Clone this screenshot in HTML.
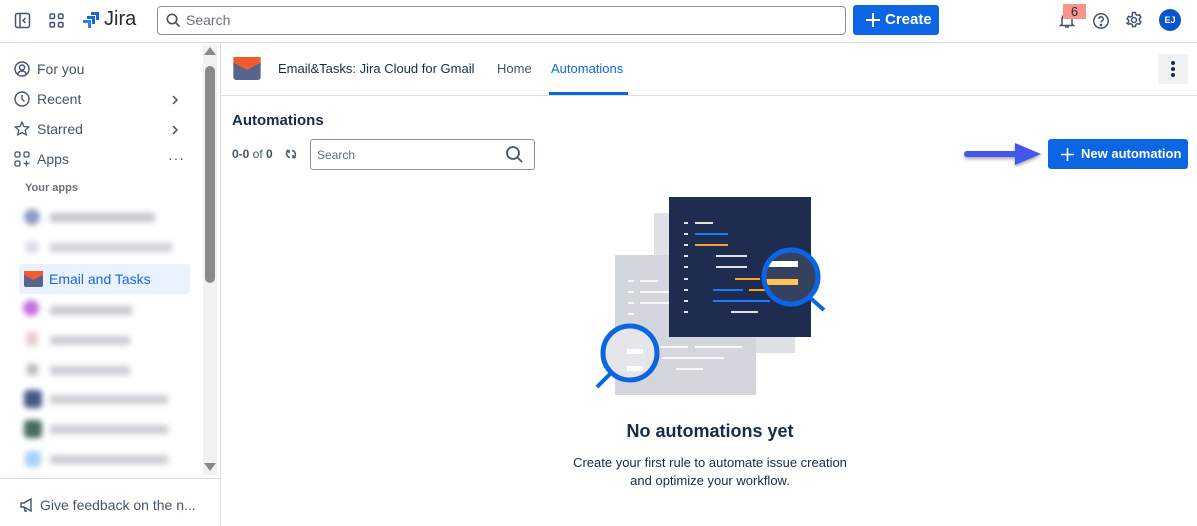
<!DOCTYPE html>
<html><head><meta charset="utf-8"><style>
*{box-sizing:border-box;margin:0;padding:0}
body{width:1197px;height:526px;overflow:hidden;background:#fff;font-family:"Liberation Sans",sans-serif;color:#292a2e;position:relative}
.abs{position:absolute}
.top{left:0;top:0;width:1197px;height:43px;border-bottom:1px solid #dcdfe4}
.search{left:157px;top:6px;width:689px;height:29px;border:1px solid #8c8f97;border-radius:4px;font-size:14px;color:#6b6e76;padding:0 0 0 28px;line-height:27px}
.btn{background:#0c66e4;color:#fff;border-radius:3px;font-weight:bold;font-size:14px}
.side{left:0;top:43px;width:221px;height:483px;border-right:1px solid #dcdfe4}
.nav{position:absolute;left:37px;font-size:14px;color:#44546f}
.blur{position:absolute;filter:blur(3px)}
</style></head><body>
<div class="abs top"></div>
<svg class="abs" style="left:14px;top:12px" width="18" height="18" viewBox="0 0 18 18"><rect x="1.5" y="1.5" width="14" height="14" rx="2" fill="none" stroke="#44546f" stroke-width="1.5"/><line x1="6" y1="2" x2="6" y2="16" stroke="#44546f" stroke-width="1.5"/><path d="M11.5 6 L9 8.5 L11.5 11" fill="none" stroke="#44546f" stroke-width="1.5"/></svg>
<svg class="abs" style="left:49px;top:13px" width="16" height="16" viewBox="0 0 16 16" fill="none" stroke="#44546f" stroke-width="1.5"><rect x="1" y="1" width="4.5" height="4.5" rx="1.2"/><rect x="9.5" y="1" width="4.5" height="4.5" rx="1.2"/><rect x="1" y="9.5" width="4.5" height="4.5" rx="1.2"/><rect x="9.5" y="9.5" width="4.5" height="4.5" rx="1.2"/></svg>
<svg class="abs" style="left:82px;top:11px" width="18" height="18" viewBox="0 0 18 18"><path d="M9 1h8v8h-3V4H9z" fill="#1868db"/><path d="M5 5h8v8h-3V8H5z" fill="#1868db"/><path d="M1 9h8v8H6v-5H1z" fill="#357de8"/></svg>
<div class="abs" style="left:104px;top:8px;font-size:20px;color:#292a2e">Jira</div>
<div class="abs search">Search</div>
<svg class="abs" style="left:166px;top:13px" width="15" height="15" viewBox="0 0 15 15" fill="none" stroke="#505258" stroke-width="1.6"><circle cx="6" cy="6" r="4.7"/><line x1="9.5" y1="9.5" x2="13.5" y2="13.5"/></svg>
<div class="abs btn" style="left:853px;top:5px;width:86px;height:30px;padding-left:32px;line-height:30px;font-size:15px">Create</div>
<svg class="abs" style="left:865px;top:12px" width="16" height="16"><path d="M8 1v14M1 8h14" stroke="#fff" stroke-width="2"/></svg>
<svg class="abs" style="left:1058px;top:11px" width="18" height="18" viewBox="0 0 18 18" fill="none" stroke="#44546f" stroke-width="1.5"><path d="M4 13V8a5 5 0 0 1 10 0v5l1.5 1.5h-13z"/><path d="M7 16h4"/></svg>
<div class="abs" style="left:1063px;top:4px;width:23px;height:15px;background:#f8948a;font-size:13px;text-align:center;line-height:15px;color:#292a2e">6</div>
<svg class="abs" style="left:1092px;top:12px" width="18" height="18" viewBox="0 0 18 18" fill="none" stroke="#44546f" stroke-width="1.5"><circle cx="9" cy="9" r="7.2"/><path d="M6.8 7a2.2 2.2 0 1 1 3 2c-.6.3-.8.7-.8 1.5"/><circle cx="9" cy="13" r=".6" fill="#44546f"/></svg>
<svg class="abs" style="left:1125px;top:11px" width="18" height="18" viewBox="0 0 18 18" fill="none" stroke="#44546f" stroke-width="1.5"><circle cx="9" cy="9" r="2.5"/><path d="M7.6 1.5h2.8l.5 2 1.6.9 2-.6 1.4 2.4-1.5 1.4v1.8l1.5 1.4-1.4 2.4-2-.6-1.6.9-.5 2H7.6l-.5-2-1.6-.9-2 .6L2.1 12.4l1.5-1.4V9.2L2.1 7.8 3.5 5.4l2 .6 1.6-.9z"/></svg>
<div class="abs" style="left:1159px;top:9px;width:22px;height:22px;border-radius:50%;background:#0c55cf;color:#fff;font-size:9px;font-weight:bold;text-align:center;line-height:22px">EJ</div>

<div class="abs side"></div>
<div class="abs" style="left:203px;top:45px;width:14px;height:430px;background:#f1f1f1"></div>
<div class="abs" style="left:205px;top:66px;width:10px;height:217px;background:#8a8a8a;border-radius:5px"></div>
<div class="abs" style="left:204px;top:47px;width:0;height:0;border-left:6px solid transparent;border-right:6px solid transparent;border-bottom:8px solid #8a8a8a"></div>
<div class="abs" style="left:204px;top:463px;width:0;height:0;border-left:6px solid transparent;border-right:6px solid transparent;border-top:8px solid #8a8a8a"></div>
<div class="abs" style="left:0;top:478px;width:220px;border-top:1px solid #dcdfe4"></div>

<svg class="abs" style="left:14px;top:61px" width="16" height="16" viewBox="0 0 16 16" fill="none" stroke="#44546f" stroke-width="1.4"><circle cx="8" cy="8" r="7"/><circle cx="8" cy="6.5" r="2.5"/><path d="M3.5 13c1-2 2.5-3 4.5-3s3.5 1 4.5 3"/></svg>
<div class="nav" style="top:61px">For you</div>
<svg class="abs" style="left:14px;top:91px" width="16" height="16" viewBox="0 0 16 16" fill="none" stroke="#44546f" stroke-width="1.4"><circle cx="8" cy="8" r="7"/><path d="M8 4v4l2.5 2.5"/></svg>
<div class="nav" style="top:91px">Recent</div>
<svg class="abs" style="left:14px;top:121px" width="16" height="16" viewBox="0 0 16 16" fill="none" stroke="#44546f" stroke-width="1.3"><path d="M8 1.2l2 4.3 4.7.5-3.5 3.2 1 4.6L8 11.5l-4.2 2.3 1-4.6L1.3 6l4.7-.5z"/></svg>
<div class="nav" style="top:121px">Starred</div>
<svg class="abs" style="left:14px;top:151px" width="16" height="16" viewBox="0 0 16 16" fill="none" stroke="#44546f" stroke-width="1.3"><rect x="1" y="1" width="5" height="5" rx="1.5"/><rect x="10" y="1" width="5" height="5" rx="1.5"/><rect x="1" y="10" width="5" height="5" rx="1.5"/><path d="M12.5 9.5v6M9.5 12.5h6"/></svg>
<div class="nav" style="top:151px">Apps</div>
<svg class="abs" style="left:170px;top:94px" width="10" height="12"><path d="M3 2l4 4-4 4" fill="none" stroke="#44546f" stroke-width="1.5"/></svg>
<svg class="abs" style="left:170px;top:124px" width="10" height="12"><path d="M3 2l4 4-4 4" fill="none" stroke="#44546f" stroke-width="1.5"/></svg>
<div class="abs" style="left:168px;top:150px;font-size:14px;color:#44546f;letter-spacing:1px">···</div>
<div class="abs" style="left:25px;top:182px;font-size:11px;font-weight:bold;color:#6b6e76">Your apps</div>

<div class="blur" style="left:24px;top:209px;width:16px;height:16px;background:#8a9bc4;border-radius:50%"></div>
<div class="blur" style="left:50px;top:213px;width:105px;height:9px;background:#c3c6cd"></div>
<div class="blur" style="left:26px;top:241px;width:12px;height:12px;background:#d8dbe2"></div>
<div class="blur" style="left:50px;top:243px;width:122px;height:9px;background:#cdd0d5"></div>
<div class="abs" style="left:19px;top:264px;width:171px;height:30px;background:#e9f2fe;border-radius:3px"></div>
<svg class="abs" style="left:24px;top:271px" width="19" height="16" viewBox="0 0 19 16"><path d="M0 4h19v10a2 2 0 0 1-2 2H2a2 2 0 0 1-2-2z" fill="#55658c"/><path d="M0 0h19v4l-9.5 5L0 4z" fill="#f45a2b"/><path d="M0 4l9.5 5L19 4v2l-9.5 5L0 6z" fill="#55658c"/></svg>
<div class="abs" style="left:49px;top:271px;font-size:14px;color:#1868db">Email and Tasks</div>
<div class="blur" style="left:23px;top:300px;width:16px;height:16px;background:#c56de0;border-radius:50%"></div>
<div class="blur" style="left:50px;top:306px;width:82px;height:9px;background:#c8cad0"></div>
<div class="blur" style="left:26px;top:332px;width:12px;height:14px;background:#e8cfd0"></div>
<div class="blur" style="left:50px;top:336px;width:80px;height:9px;background:#cbcdd2"></div>
<div class="blur" style="left:27px;top:364px;width:11px;height:11px;background:#b9bbc0"></div>
<div class="blur" style="left:50px;top:366px;width:80px;height:9px;background:#cbcdd2"></div>
<div class="blur" style="left:24px;top:390px;width:18px;height:18px;background:#44598a;border-radius:4px"></div>
<div class="blur" style="left:50px;top:395px;width:118px;height:9px;background:#cbcdd2"></div>
<div class="blur" style="left:24px;top:420px;width:18px;height:18px;background:#446d5a;border-radius:4px"></div>
<div class="blur" style="left:50px;top:425px;width:118px;height:9px;background:#cbcdd2"></div>
<div class="blur" style="left:25px;top:451px;width:16px;height:16px;background:#a8d3f7;border-radius:4px"></div>
<div class="blur" style="left:50px;top:455px;width:118px;height:9px;background:#cbcdd2"></div>

<svg class="abs" style="left:19px;top:497px" width="16" height="16" viewBox="0 0 16 16" fill="none" stroke="#44546f" stroke-width="1.4"><path d="M2 6h3l7-4v12L5 10H2zM5 10l1 4h2"/></svg>
<div class="abs" style="left:40px;top:497px;font-size:14px;color:#44546f">Give feedback on the n...</div>

<div class="abs" style="left:221px;top:95px;width:976px;border-top:1px solid #dcdfe4"></div>
<svg class="abs" style="left:232px;top:57px" width="30" height="23" viewBox="0 0 19 16"><path d="M0 4h19v10a2 2 0 0 1-2 2H2a2 2 0 0 1-2-2z" fill="#55658c"/><path d="M0 0h19v4l-9.5 5L0 4z" fill="#f45a2b"/><path d="M0 4l9.5 5L19 4v2l-9.5 5L0 6z" fill="#55658c"/></svg>
<div class="abs" style="left:278px;top:61px;font-size:13px;color:#172b4d">Email&amp;Tasks: Jira Cloud for Gmail</div>
<div class="abs" style="left:497px;top:61px;font-size:13px;color:#44546f">Home</div>
<div class="abs" style="left:551px;top:61px;font-size:13px;color:#0c66e4">Automations</div>
<div class="abs" style="left:549px;top:92px;width:79px;height:3px;background:#0c66e4"></div>
<div class="abs" style="left:1158px;top:54px;width:30px;height:30px;background:#f1f2f4;border-radius:3px"></div>
<div class="abs" style="left:1171px;top:61px;width:4px;height:4px;border-radius:50%;background:#172b4d;box-shadow:0 6px 0 #172b4d,0 12px 0 #172b4d"></div>

<div class="abs" style="left:232px;top:112px;font-size:15px;font-weight:bold;color:#172b4d">Automations</div>
<div class="abs" style="left:232px;top:147px;font-size:12px;color:#44546f"><b>0-0</b> of <b>0</b></div>
<svg class="abs" style="left:285px;top:148px" width="12" height="12" viewBox="0 0 12 12" fill="none" stroke="#44546f" stroke-width="1.5"><path d="M3 2.5a4 4 0 0 0 2 7M9 9.5a4 4 0 0 0-2-7M1.5 2.5H4V5M10.5 9.5H8V7"/></svg>
<div class="abs" style="left:310px;top:139px;width:225px;height:31px;border:1px solid #8590a2;border-radius:3px;font-size:12px;color:#626f86;padding:8px 0 0 6px">Search</div>
<svg class="abs" style="left:505px;top:145px" width="19" height="19" viewBox="0 0 19 19" fill="none" stroke="#44546f" stroke-width="1.8"><circle cx="8" cy="8" r="6"/><line x1="12.5" y1="12.5" x2="17" y2="17"/></svg>

<svg class="abs" style="left:960px;top:138px" width="85" height="34"><defs><filter id="s"><feDropShadow dx="0" dy="2" stdDeviation="1.5" flood-opacity=".35"/></filter></defs><g filter="url(#s)"><line x1="7" y1="16" x2="58" y2="16" stroke="#4557ef" stroke-width="6" stroke-linecap="round"/><path d="M55 5l26 11-26 11z" fill="#4557ef"/></g></svg>
<div class="abs btn" style="left:1048px;top:139px;width:140px;height:30px;padding-left:33px;line-height:30px;font-size:13px">New automation</div>
<svg class="abs" style="left:1060px;top:147px" width="15" height="15"><path d="M7.5 1v13M1 7.5h13" stroke="#fff" stroke-width="1.6"/></svg>

<svg class="abs" style="left:580px;top:190px" width="260" height="210" viewBox="580 190 260 210">
<rect x="654" y="213" width="141" height="140" fill="#dfe1e6"/>
<rect x="615" y="255" width="141" height="140" fill="#d3d6dc"/>
<rect x="669" y="197" width="142" height="140" fill="#1d2c4f"/>
<g stroke="#fff" stroke-width="2" opacity=".85"><line x1="628" y1="281" x2="634" y2="281"/><line x1="640" y1="281" x2="658" y2="281"/><line x1="628" y1="292" x2="634" y2="292"/><line x1="640" y1="292" x2="669" y2="292"/><line x1="628" y1="303" x2="634" y2="303"/><line x1="640" y1="303" x2="669" y2="303"/><line x1="628" y1="314" x2="634" y2="314"/><line x1="660" y1="347" x2="688" y2="347"/><line x1="695" y1="347" x2="742" y2="347"/><line x1="662" y1="358" x2="724" y2="358"/><line x1="676" y1="369" x2="703" y2="369"/></g>
<g stroke-width="2"><g stroke="#dfe1e6"><line x1="684" y1="223" x2="688" y2="223"/><line x1="684" y1="234" x2="688" y2="234"/><line x1="684" y1="245" x2="688" y2="245"/><line x1="684" y1="256" x2="688" y2="256"/><line x1="684" y1="267" x2="688" y2="267"/><line x1="684" y1="279" x2="688" y2="279"/><line x1="684" y1="290" x2="688" y2="290"/><line x1="684" y1="301" x2="688" y2="301"/><line x1="684" y1="312" x2="688" y2="312"/><line x1="695" y1="223" x2="713" y2="223"/><line x1="716" y1="256" x2="747" y2="256"/><line x1="716" y1="267" x2="747" y2="267"/><line x1="731" y1="312" x2="758" y2="312"/></g>
<line x1="695" y1="234" x2="728" y2="234" stroke="#1d7afc"/><line x1="695" y1="245" x2="728" y2="245" stroke="#f5a623"/><line x1="735" y1="279" x2="760" y2="279" stroke="#f5a623"/><line x1="713" y1="290" x2="743" y2="290" stroke="#1d7afc"/><line x1="749" y1="290" x2="765" y2="290" stroke="#f5a623"/><line x1="713" y1="301" x2="770" y2="301" stroke="#1d7afc"/></g>
<circle cx="791" cy="277" r="27" fill="#34425f"/>
<rect x="766" y="261" width="32" height="6" fill="#fff"/><rect x="766" y="279" width="32" height="6" fill="#ffc453"/>
<line x1="808" y1="296" x2="824" y2="310" stroke="#0c66e4" stroke-width="4"/>
<circle cx="791" cy="277" r="27" fill="none" stroke="#0c66e4" stroke-width="5"/>
<circle cx="630" cy="353" r="27" fill="#e4e6ea"/>
<rect x="627" y="349" width="16" height="5" fill="#fff"/><rect x="627" y="366" width="16" height="5" fill="#fff"/>
<line x1="612" y1="372" x2="597" y2="387" stroke="#0c66e4" stroke-width="4"/>
<circle cx="630" cy="353" r="27" fill="none" stroke="#0c66e4" stroke-width="5"/>
</svg>

<div class="abs" style="left:0;width:1420px;top:421px;text-align:center;font-size:18px;font-weight:bold;color:#172b4d">No automations yet</div>
<div class="abs" style="left:0;width:1420px;top:454px;text-align:center;font-size:13px;line-height:18px;color:#172b4d">Create your first rule to automate issue creation<br>and optimize your workflow.</div>
</body></html>
